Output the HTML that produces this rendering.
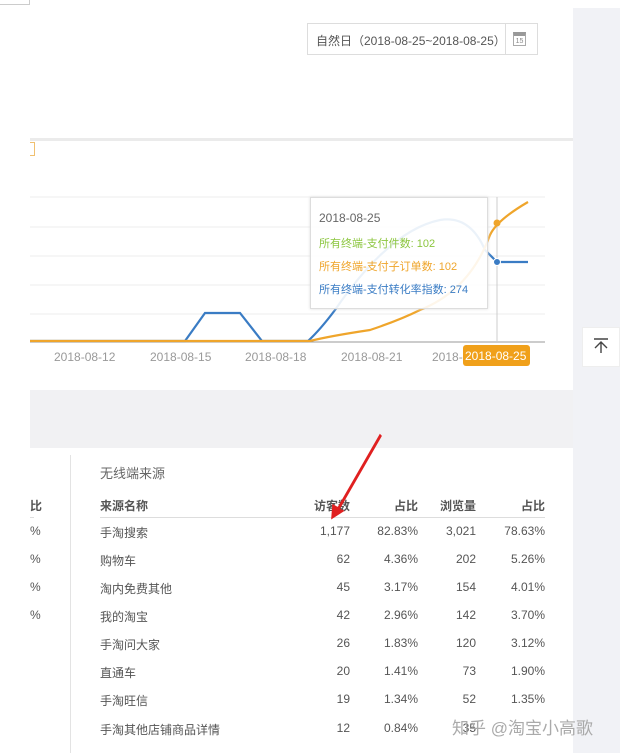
<!DOCTYPE html>
<html><head><meta charset="utf-8"><style>
*{margin:0;padding:0;box-sizing:border-box}
body{width:620px;height:753px;position:relative;overflow:hidden;background:#fff;font-family:"Liberation Sans","Noto Sans CJK SC",sans-serif;color:#555;font-size:12px}
.a{position:absolute;white-space:nowrap}
.r{text-align:right}
</style></head><body>
<div class="a" style="left:573px;top:8px;width:47px;height:745px;background:#f1f2f6"></div>
<div class="a" style="left:0;top:0;width:30px;height:5px;border:1px solid #ccc;border-top:none;border-left:none"></div>
<div class="a" style="left:30px;top:138px;width:543px;height:3px;background:#ebebeb"></div>
<div class="a" style="left:30px;top:390px;width:543px;height:58px;background:#f1f1f3"></div>
<div class="a" style="left:307px;top:23px;width:231px;height:32px;border:1px solid #ddd;background:#fff"></div>
<div class="a" style="left:505px;top:23px;width:1px;height:32px;background:#ddd"></div>
<div class="a" style="left:316px;top:32px;font-size:12px;color:#555">自然日（2018-08-25~2018-08-25）</div>
<div class="a" style="left:513px;top:32px;width:13px;height:14px;border:1px solid #aaa;font-size:7px;text-align:center;line-height:12px;color:#888;border-top:4px solid #999">15</div>
<div class="a" style="left:30px;top:142px;width:5px;height:14px;border:1px solid #f0c070;border-left:none"></div>
<svg class="a" style="left:0;top:140px" width="573" height="250">
<g stroke="#eee" stroke-width="1">
<line x1="30" y1="57" x2="545" y2="57"/><line x1="30" y1="87" x2="545" y2="87"/><line x1="30" y1="116" x2="545" y2="116"/><line x1="30" y1="145" x2="545" y2="145"/><line x1="30" y1="174" x2="545" y2="174"/>
</g>
<line x1="30" y1="202" x2="545" y2="202" stroke="#999"/>
<line x1="497" y1="57" x2="497" y2="202" stroke="#ccc"/>
<path d="M30 201 L185 201 L205 173 L240 173 L262 201 L308 201 Q320 190 335 170 Q390 90 440 80 Q470 75 485 110 L497 122 L528 122" fill="none" stroke="#3a7cc4" stroke-width="2.2"/>
<path d="M30 201 L310 201 Q330 196 370 190 Q400 180 420 170 Q470 150 490 95 Q497 80 528 62" fill="none" stroke="#efa52b" stroke-width="2.2"/>
<circle cx="497" cy="83" r="3.5" fill="#efa52b"/>
<circle cx="497" cy="122" r="3.5" fill="#3a7cc4" stroke="#fff"/>
</svg>
<div class="a" style="left:310px;top:197px;width:178px;height:112px;border:1px solid #ddd;background:rgba(255,255,255,0.9);box-shadow:0 0 3px #ddd"></div>
<div class="a" style="left:319px;top:211px;font-size:12px;color:#666">2018-08-25</div>
<div class="a" style="left:319px;top:235px;font-size:11px;color:#8cc63f">所有终端-支付件数: 102</div>
<div class="a" style="left:319px;top:258px;font-size:11px;color:#efa52b">所有终端-支付子订单数: 102</div>
<div class="a" style="left:319px;top:281px;font-size:11px;color:#3a7cc4">所有终端-支付转化率指数: 274</div>
<div class="a" style="left:54px;top:350px;color:#999">2018-08-12</div>
<div class="a" style="left:150px;top:350px;color:#999">2018-08-15</div>
<div class="a" style="left:245px;top:350px;color:#999">2018-08-18</div>
<div class="a" style="left:341px;top:350px;color:#999">2018-08-21</div>
<div class="a" style="left:432px;top:350px;color:#999">2018-</div>
<div class="a" style="left:463px;top:345px;width:67px;height:21px;background:#f0a01a;border-radius:3px;color:#fff;padding:4px 0 0 2px">2018-08-25</div>
<div class="a" style="left:582px;top:327px;width:38px;height:40px;background:#fff;border:1px solid #eee"></div>
<svg class="a" style="left:592px;top:337px" width="18" height="18"><path d="M2 2H16M9 16V5M3 11L9 5L15 11" fill="none" stroke="#444" stroke-width="1.4"/></svg>
<div class="a" style="left:70px;top:455px;width:1px;height:298px;background:#e3e3e3"></div>
<div class="a" style="left:100px;top:463px;font-size:13px;color:#666">无线端来源</div>
<div class="a" style="left:100px;top:497px;font-weight:bold;color:#555">来源名称</div>
<div class="a r" style="left:290px;top:497px;width:60px;font-weight:bold">访客数</div>
<div class="a r" style="left:358px;top:497px;width:60px;font-weight:bold">占比</div>
<div class="a r" style="left:416px;top:497px;width:60px;font-weight:bold">浏览量</div>
<div class="a r" style="left:485px;top:497px;width:60px;font-weight:bold">占比</div>
<div class="a" style="left:30px;top:497px;font-weight:bold">比</div>
<div class="a" style="left:30px;top:517px;width:4px;height:1px;background:#ddd"></div>
<div class="a" style="left:100px;top:517px;width:445px;height:1px;background:#ddd"></div>
<div class="a" style="left:30px;top:524px">%</div>
<div class="a" style="left:30px;top:552px">%</div>
<div class="a" style="left:30px;top:580px">%</div>
<div class="a" style="left:30px;top:608px">%</div>
<div class="a" style="left:100px;top:524px">手淘搜索</div><div class="a r" style="left:290px;top:524px;width:60px">1,177</div><div class="a r" style="left:358px;top:524px;width:60px">82.83%</div><div class="a r" style="left:416px;top:524px;width:60px">3,021</div><div class="a r" style="left:485px;top:524px;width:60px">78.63%</div>
<div class="a" style="left:100px;top:552px">购物车</div><div class="a r" style="left:290px;top:552px;width:60px">62</div><div class="a r" style="left:358px;top:552px;width:60px">4.36%</div><div class="a r" style="left:416px;top:552px;width:60px">202</div><div class="a r" style="left:485px;top:552px;width:60px">5.26%</div>
<div class="a" style="left:100px;top:580px">淘内免费其他</div><div class="a r" style="left:290px;top:580px;width:60px">45</div><div class="a r" style="left:358px;top:580px;width:60px">3.17%</div><div class="a r" style="left:416px;top:580px;width:60px">154</div><div class="a r" style="left:485px;top:580px;width:60px">4.01%</div>
<div class="a" style="left:100px;top:608px">我的淘宝</div><div class="a r" style="left:290px;top:608px;width:60px">42</div><div class="a r" style="left:358px;top:608px;width:60px">2.96%</div><div class="a r" style="left:416px;top:608px;width:60px">142</div><div class="a r" style="left:485px;top:608px;width:60px">3.70%</div>
<div class="a" style="left:100px;top:636px">手淘问大家</div><div class="a r" style="left:290px;top:636px;width:60px">26</div><div class="a r" style="left:358px;top:636px;width:60px">1.83%</div><div class="a r" style="left:416px;top:636px;width:60px">120</div><div class="a r" style="left:485px;top:636px;width:60px">3.12%</div>
<div class="a" style="left:100px;top:664px">直通车</div><div class="a r" style="left:290px;top:664px;width:60px">20</div><div class="a r" style="left:358px;top:664px;width:60px">1.41%</div><div class="a r" style="left:416px;top:664px;width:60px">73</div><div class="a r" style="left:485px;top:664px;width:60px">1.90%</div>
<div class="a" style="left:100px;top:692px">手淘旺信</div><div class="a r" style="left:290px;top:692px;width:60px">19</div><div class="a r" style="left:358px;top:692px;width:60px">1.34%</div><div class="a r" style="left:416px;top:692px;width:60px">52</div><div class="a r" style="left:485px;top:692px;width:60px">1.35%</div>
<div class="a" style="left:100px;top:721px">手淘其他店铺商品详情</div><div class="a r" style="left:290px;top:721px;width:60px">12</div><div class="a r" style="left:358px;top:721px;width:60px">0.84%</div><div class="a r" style="left:416px;top:721px;width:60px">35</div>
<div class="a" style="left:452px;top:714px;font-size:17px;color:#aaa">知乎 @淘宝小高歌</div>
<svg class="a" style="left:320px;top:430px" width="70" height="95"><path d="M60 5 L18 78 L13 75 L12 88 L23 81 L19 79 L61 6 Z" fill="#e02020" stroke="#e02020" stroke-width="1.5"/></svg>
</body></html>
